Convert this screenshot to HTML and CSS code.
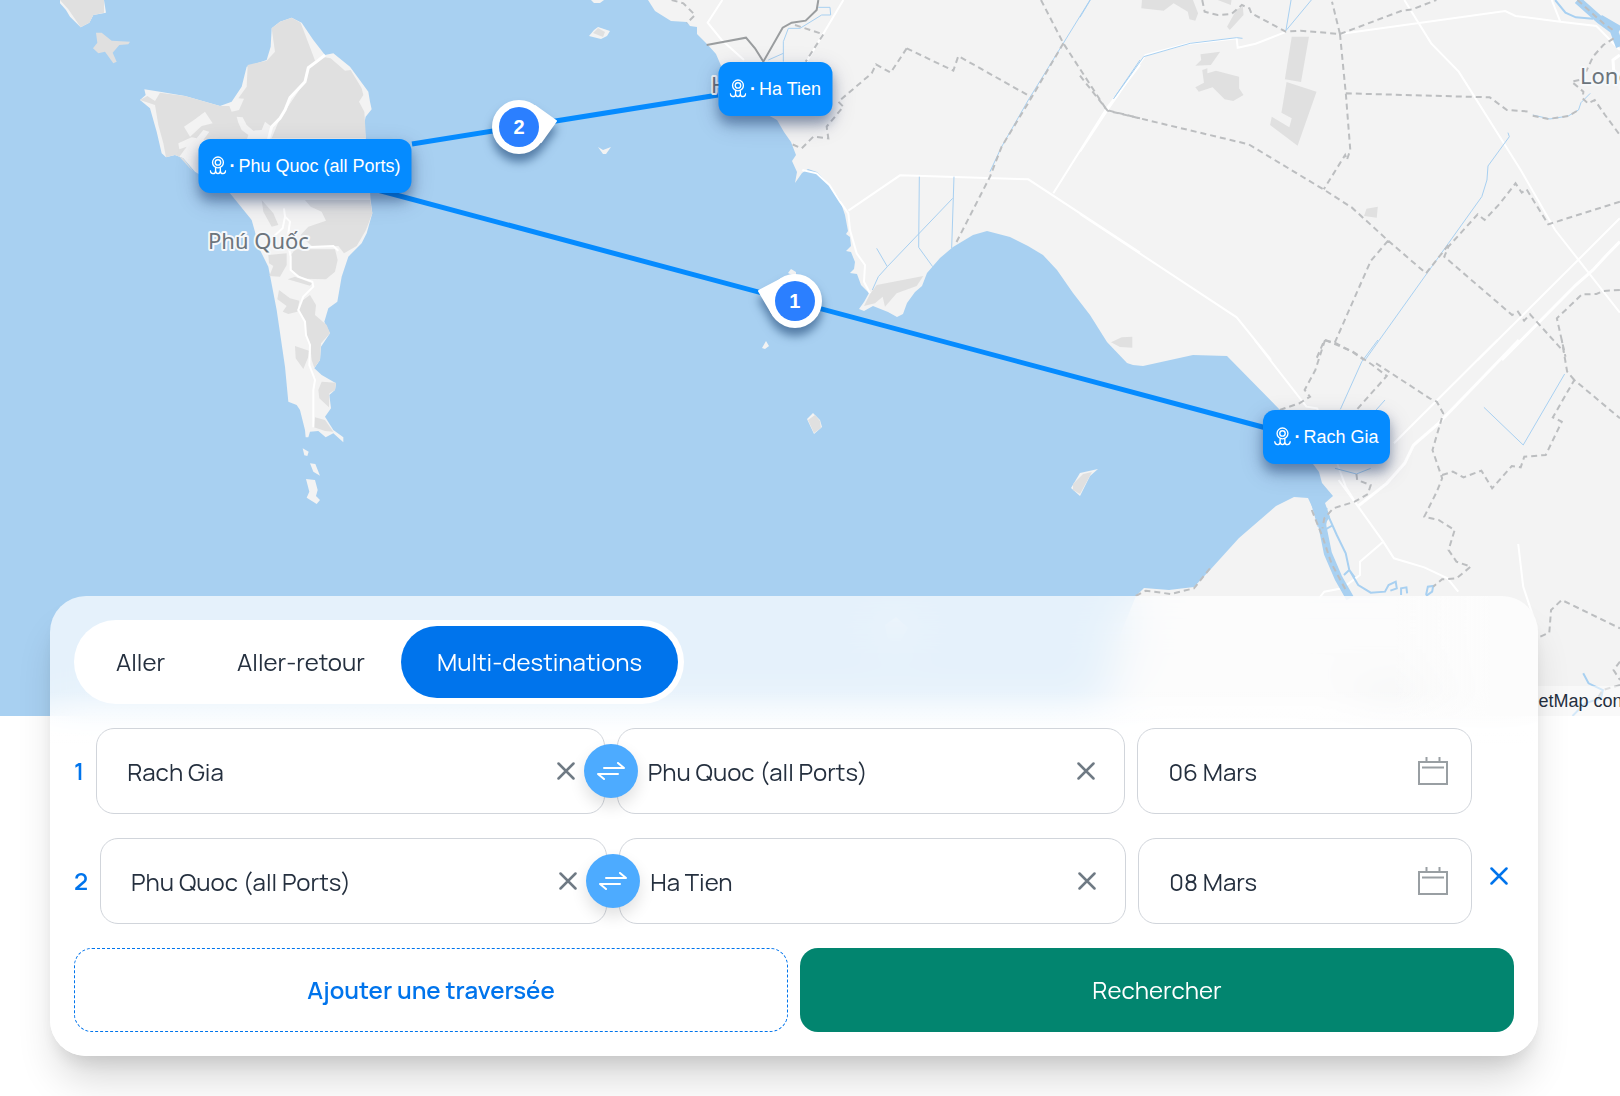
FILE: index.html
```html
<!DOCTYPE html>
<html lang="fr">
<head>
<meta charset="utf-8">
<meta name="viewport" content="width=device-width, initial-scale=1">
<title>Recherche de traversées</title>
<link rel="stylesheet" href="styles.css">
</head>
<body>
<svg class="sprite" aria-hidden="true">
  <symbol id="icon-port" viewBox="0 0 50 56"><circle cx="25" cy="19" r="16"/><circle cx="25" cy="19" r="8"/><path d="M18 33V44Q18 52 10 52Q3 52 2 42M32 33V44Q32 52 40 52Q47 52 48 42M18 44Q19 52 25 52Q31 52 32 44"/></symbol>
  <symbol id="icon-close" viewBox="0 0 36 36"><path d="M3 3L33 33M33 3L3 33"/></symbol>
  <symbol id="icon-swap" viewBox="0 0 28 18"><path d="M7 6H27L21 1M21 12H1L7 17"/></symbol>
  <symbol id="icon-calendar" viewBox="0 0 30 28"><path d="M1 5H29V27H1ZM4 10.500H26M8.500 0V6M21.500 0V6"/></symbol>
</svg>

<main>
  <section class="map" aria-label="Carte des traversées">
    <svg class="map-canvas" viewBox="0 0 1620 716" aria-hidden="true">
      <!-- mainland -->
      <path class="land" d="M648 0L655 11L671 21L687 22L690 26L697 27L697 34L708 45L716 54L722 68L730 85L750 105L777 120L784 132L791 142L796 155L792 161L797 172L795 183L802 173L808 169L817 172L829 184L840 200L845 215L848 231L846 234L850 237L851 246L846 251L851 252L855 262L854 269L850 273L857 274L861 285L869 293L864 302L859 309L864 311L873 306L888 312L897 317L903 314L907 303L915 292L922 286L927 273L940 258L953 247L973 235L987 231L1010 237L1028 246L1043 255L1057 270L1073 293L1090 315L1107 342L1127 363L1133 365L1143 366L1193 355L1227 356L1280 410L1295 440L1319 472L1322 483L1333 496L1325 503L1330 517L1322 528L1308 498L1294 497L1276 506L1239 538L1210 570L1194 587L1169 590L1144 588L1136 596L1118 640L1105 716H1620V0Z"/>

      <!-- Phu Quoc and nearby islets -->
      <g transform="translate(60 0) scale(.33333)">
        <path class="land" d="M635 85L660 65L695 53L725 68L760 120L795 165L820 160L870 200L925 275L930 305L935 328L917 350L912 375L918 420L932 600L937 640L920 700L905 730L865 770L845 830L832 905L805 925L793 965L810 1000L783 1040L780 1080L763 1105L785 1125L828 1150L825 1170L808 1185L813 1225L795 1250L820 1290L850 1312V1327L820 1300L797 1312L775 1293L750 1295L745 1312H737L735 1290L720 1230L710 1215L685 1205L675 1100L650 930L625 800L600 750L575 660L510 580L405 515L370 475L345 465L318 472L305 460L290 395L270 325L240 300L257 285L253 268L300 275L375 288L480 318L515 305L545 260L560 200L620 180L632 140Z"/>
        <path class="land" d="M0 10L18 30L30 50L62 82L88 68L100 45L138 38L132 0H0ZM728 1345L746 1355L742 1368L733 1366ZM750 1390L766 1392L780 1427L760 1415ZM738 1437L765 1440L773 1470L768 1488L780 1500L770 1512L740 1493L748 1475Z"/>
        <path class="park" d="M0 0L25 28L62 82L88 68L100 45L132 38V0ZM108 98L125 98L155 122L210 125L205 133L178 135L158 158L170 185L160 190L135 155L115 160L99 145L112 128Z"/>
        <path class="park" d="M635 85L660 65L695 53L722 68L767 187L745 203L735 245L695 290L675 330L660 355L635 380L615 365L605 390L580 392L560 375L548 352L530 350L535 368L545 390L565 405L560 420H430L448 395L430 390L410 415L395 412L355 430L358 448L380 440L358 470L400 515L370 475L345 465L318 472L310 430L295 375L285 315L240 300L262 288L285 303L300 278L375 288L480 318L508 318L515 335L537 330L552 296L535 295L560 260L563 195L620 182L645 155L640 120Z"/>
        <path class="park" d="M767 187L795 172L812 175L855 212L872 210L905 265L910 285L897 305L913 335L918 415H635L660 355L735 245L745 205ZM735 600H930L937 640L918 690L890 738L852 760L835 738L760 742L735 720L722 705L745 680L798 662L785 635L752 620ZM705 748H825L833 780L825 815L798 838L730 836L695 810L690 770ZM605 600L640 640L655 675L635 680L610 635ZM625 765L680 760V795L660 830L628 828L640 798L627 790ZM683 838L705 830L757 850L750 857ZM657 870L690 895L718 902L712 935L685 942L668 935L680 918L652 898ZM750 885L768 915L765 945L800 975L810 1000L783 1030L780 1080L763 1103L755 1080L750 1030L738 1005L735 965L716 930L722 905ZM705 1038L747 1052L745 1070L730 1107L707 1075ZM785 1145L828 1148L825 1170L808 1180L807 1222L778 1195L775 1170ZM765 1252L795 1260L820 1295L795 1293L762 1282Z"/>
        <path class="land" d="M372 380L405 358L435 335L458 370L425 378L390 410Z"/>
        <path class="road thick" d="M795 165L767 187L745 203L735 245L690 293L675 330L660 355L635 380L625 420"/>
        <path class="road" d="M672 625L675 650L668 685L640 710M675 650L690 665L682 720L692 770V810L715 830L757 845L760 860L730 890L715 930L735 965L738 1005L750 1035L748 1095L765 1140L760 1170V1282M735 742L820 738L835 752"/>
      </g>
      <path class="land" d="M589 36L594 30L598 27L610 31L607 36L601 39ZM598 147L603 150L611 147L606 154H603ZM591 0H604L600 3H594ZM788 273L791 269L796 272V277ZM762 348L766 341L769 346L765 349ZM807 419L813 413L820 420L822 427L814 434ZM1071 488L1080 473L1098 469L1090 476L1080 496ZM885 625L896 617L908 628L900 642L888 640Z"/>
      <path class="park" d="M593 33L598 28L605 32L603 37ZM808 420L815 415L820 421L821 428L814 433ZM1073 484L1083 474L1092 472L1080 494L1073 490Z"/>

      <!-- west side of the mainland -->
      <g transform="translate(640 0) scale(.33333)">
        <path class="park" d="M710 855L850 828L830 858L770 880L735 920L728 890L705 910L672 918L690 882ZM1413 1027L1445 1012L1477 1010V1043L1440 1041Z"/>
        <path class="road" d="M247 0L203 68L245 120L312 180M610 0L500 185M487 510L530 520L568 555L600 605L625 640L630 690L650 760L675 795L672 845L690 880M625 632L780 526L1165 538L1500 758M1500 195L1400 325L1240 580"/>
        <path class="water" d="M838 530L836 742L878 800M942 530L935 745M938 595L742 800L715 830L697 870M710 745L742 800M1350 0L1165 300L1085 440L1050 515M1500 180L1425 290M535 22H570L572 45H545L480 85L445 85L430 125V185M430 160L385 180"/>
        <path class="border-minor" d="M95 0L130 10L165 45L140 70M465 75L550 103L497 185M800 145L940 212L955 168L1175 292M800 145L752 218L708 193L695 220L595 305L610 320L560 380L565 415L520 410L485 445L450 430M1203 0L1270 130L1400 330L1500 355M1270 130L1175 292L1085 440L1050 530L945 735"/>
        <path class="border-major" d="M200 135L318 113L345 145L370 185L428 83L455 68L497 62L530 30L535 0"/>
      </g>

      <!-- east side of the mainland -->
      <g transform="translate(1080 0) scale(.3443 .33333)">
        <path class="park" d="M180 0L178 25L243 32L272 10L313 35L318 58L335 62L343 40L328 0ZM400 0L438 15L440 0ZM473 20L475 45L435 90L427 80L455 28ZM350 163L407 155L380 195L335 197L352 180ZM355 210L370 205V220L395 212L462 230V265L475 285L445 303L420 298L385 262L345 275L335 262L360 248ZM615 110H665L642 246L595 238ZM600 246L687 275L632 437L552 375L557 350L608 382L615 355L585 338ZM832 626L865 620L862 653L825 648Z"/>
        <path class="road" d="M0 455L80 330L190 165L310 132L455 115L458 143L510 131L600 95M755 102L1235 33L1265 48L1395 65L1500 78L1568 150M942 0L1020 130L1100 215L1280 510L1380 690L1568 938M0 642L455 952L555 1080M1568 655L1155 1080M1395 65L1370 0"/>
        <path class="road thick" d="M1568 725L1530 765L1490 810L1440 855L1225 1080M1568 165L1548 180L1550 210L1568 230"/>
        <path class="water" d="M30 0L0 52M97 297L185 170L320 130L455 113L472 115M598 92L613 0M598 92L672 0M1243 398L1247 410L1185 498L1182 540L1167 590L1070 730L828 1080M1315 345L1365 357L1418 348L1448 330L1455 308L1482 280"/>
        <path class="stream" d="M1380 0L1410 38L1440 52L1490 56"/>
        <path class="river" d="M1445 0L1510 60L1550 90L1568 140M1510 55L1568 90"/>
        <path class="border-minor" d="M0 227L80 332L490 433L710 570L790 623L895 722L1005 820L1070 735M355 0L362 35L400 45L440 42L470 15L492 25L498 40L598 95L640 92L755 102L732 5M755 102L935 32L965 28L1035 0M755 102L772 280L785 450L775 480L770 465L708 568M772 280L1190 292L1240 330L1310 335M1315 347L1360 357L1418 348L1448 330M895 722L845 782L820 840L740 1028L710 1020L685 1080M740 1028L790 1055L825 1080M1568 605L1360 673L1297 568L1283 578L1265 550L1220 610L1175 660L1155 643L1070 740L1058 770L1255 945L1272 935L1290 962L1307 943L1405 1055M1568 870L1520 873L1500 882L1458 883L1385 955L1410 1070M1550 115L1520 135L1490 170L1470 215M1450 240L1428 245L1462 275L1460 295L1475 310L1495 300L1525 345L1568 405M1445 0L1520 70L1555 95"/>
      </g>

      <!-- around Rach Gia -->
      <g transform="translate(1060 340) scale(.35714 .33333)">
        <path class="road" d="M545 0L690 200L720 205L800 440L835 500L905 605L935 655L1020 682L1085 715L1115 755M905 605L840 665V705L790 745L740 755L725 775M780 420L835 500M1225 0L935 310M1283 612L1297 740L1325 830"/>
        <path class="road thick" d="M1285 0L1060 250L990 315L965 370L915 430L835 498"/>
        <path class="water" d="M890 0L845 65L785 208M910 180L885 210M1187 202L1297 315L1413 102M770 385L830 402L870 385"/>
        <path class="stream" d="M1465 1000L1480 1030L1520 1050L1515 1075L1470 1090L1435 1128M752 530L775 585L800 640L810 690L835 735L870 758L910 755L920 735L940 725L943 745L925 752M745 540L740 570L765 555M795 705L810 690L825 712M1025 765L1030 740L1045 738L1042 755L1025 768M955 765V745L970 742L972 760"/>
        <path class="river" d="M716 480L735 560L750 640L780 715L812 775M712 480L725 530L740 500"/>
        <path class="border-minor" d="M742 0L715 90L685 150L700 170L670 190L615 210M742 0L820 35L875 75L915 108L830 210M885 70L1035 175L1055 185L1073 220L1043 330L1070 415L1055 455L1020 530L1060 540L1105 570L1088 630L1110 665L1150 680L1110 715L1070 718L1045 740M1070 405L1100 395L1130 412L1180 392L1210 445L1265 378L1290 382L1300 350L1360 345L1405 245L1380 232L1440 120L1568 235M1440 120L1420 95L1405 0M830 402L832 420L870 435L862 462L825 485L765 505L740 535L735 565M705 510L735 590L760 670L800 750M212 768L240 752L310 762L375 745L420 685M1345 890L1370 878L1375 810L1405 780L1568 865M1568 965L1550 990L1568 1020M1568 1035L1520 1050L1505 1075"/>
      </g>

      <path class="route" d="M412 144L718 95M370 188L1270 429"/>
      <g class="place">
        <text x="208" y="249">Phú Quốc</text>
        <text x="711" y="93">Hà Tiên</text>
        <text x="1580" y="84">Long Xuyên</text>
      </g>
    </svg>

    <p class="attribution">© MapTiler © OpenStreetMap contributors</p>

    <div class="port" style="left:18.83%;top:23.12%"><svg class="port-icon"><use href="#icon-port"/></svg><b>·</b><span>Phu Quoc (all Ports)</span></div>
    <div class="port" style="left:47.87%;top:12.43%"><svg class="port-icon"><use href="#icon-port"/></svg><b>·</b><span>Ha Tien</span></div>
    <div class="port" style="left:81.88%;top:61.03%"><svg class="port-icon"><use href="#icon-port"/></svg><b>·</b><span>Rach Gia</span></div>

    <div class="step" style="left:49.07%;top:42.04%">
      <svg class="step-shape" viewBox="-40 -40 80 80" aria-hidden="true"><path d="M-36 -10L-13 -22L-23 12Z"/><circle r="26"/></svg><span class="step-number">1</span>
    </div>
    <div class="step" style="left:32.04%;top:17.7%">
      <svg class="step-shape" viewBox="-40 -40 80 80" aria-hidden="true"><path d="M37 -6L16 -21L22 15Z"/><circle r="26"/></svg><span class="step-number">2</span>
    </div>
  </section>

  <form class="search">
    <div class="tabs" role="tablist" aria-label="Type de trajet">
      <button class="tab" type="button" role="tab" aria-selected="false">Aller</button>
      <button class="tab" type="button" role="tab" aria-selected="false">Aller-retour</button>
      <button class="tab active" type="button" role="tab" aria-selected="true">Multi-destinations</button>
    </div>

    <div class="leg">
      <span class="leg-number">1</span>
      <div class="leg-fields">
        <div class="field">
          <input type="text" value="Rach Gia" aria-label="Départ, traversée 1">
          <button class="clear" type="button" aria-label="Effacer le départ"><svg><use href="#icon-close"/></svg></button>
          <button class="swap" type="button" aria-label="Inverser"><svg><use href="#icon-swap"/></svg></button>
        </div>
        <div class="field">
          <input type="text" value="Phu Quoc (all Ports)" aria-label="Arrivée, traversée 1">
          <button class="clear" type="button" aria-label="Effacer l'arrivée"><svg><use href="#icon-close"/></svg></button>
        </div>
        <div class="field date">
          <input type="text" value="06 Mars" aria-label="Date, traversée 1">
          <svg class="calendar" aria-hidden="true"><use href="#icon-calendar"/></svg>
        </div>
      </div>
      <span class="leg-end"></span>
    </div>

    <div class="leg">
      <span class="leg-number">2</span>
      <div class="leg-fields">
        <div class="field">
          <input type="text" value="Phu Quoc (all Ports)" aria-label="Départ, traversée 2">
          <button class="clear" type="button" aria-label="Effacer le départ"><svg><use href="#icon-close"/></svg></button>
          <button class="swap" type="button" aria-label="Inverser"><svg><use href="#icon-swap"/></svg></button>
        </div>
        <div class="field">
          <input type="text" value="Ha Tien" aria-label="Arrivée, traversée 2">
          <button class="clear" type="button" aria-label="Effacer l'arrivée"><svg><use href="#icon-close"/></svg></button>
        </div>
        <div class="field date">
          <input type="text" value="08 Mars" aria-label="Date, traversée 2">
          <svg class="calendar" aria-hidden="true"><use href="#icon-calendar"/></svg>
        </div>
      </div>
      <button class="leg-end remove" type="button" aria-label="Supprimer la traversée 2"><svg><use href="#icon-close"/></svg></button>
    </div>

    <div class="actions">
      <button class="action add" type="button">Ajouter une traversée</button>
      <button class="action submit" type="submit">Rechercher</button>
    </div>
  </form>
</main>
</body>
</html>
```

FILE: styles.css
```css
* {
  box-sizing: border-box;
}

body {
  margin: 0;
  background: #fff;
  color: #25303f;
  font-family: Manrope, Inter, "Liberation Sans", sans-serif;
  font-size: 24px;
  font-weight: 400;
  line-height: 32px;
}

main {
  overflow: hidden;
  padding-bottom: 40px;
}

button,
input {
  margin: 0;
  padding: 0;
  border: 0;
  background: none;
  color: inherit;
  font: inherit;
}

button {
  cursor: pointer;
}

svg {
  display: block;
  fill: none;
}

.sprite {
  position: absolute;
  width: 0;
  height: 0;
}

/* Map */
.map {
  position: relative;
  isolation: isolate;
  overflow: hidden;
  aspect-ratio: 1620 / 716;
  background: #a8d0f1;
  font-family: "Liberation Sans", Arial, sans-serif;
}

.map-canvas {
  width: 100%;
}

.map-canvas path {
  vector-effect: non-scaling-stroke;
}

.land {
  fill: #f3f3f3;
}

.park {
  fill: #e0e0e0;
}

.road {
  stroke: #fff;
  stroke-width: 2px;
}

.road.thick {
  stroke-width: 3px;
}

.water {
  stroke: #a8d0f1;
  stroke-width: 1px;
}

.stream {
  stroke: #a8d0f1;
  stroke-width: 2px;
}

.river {
  stroke: #a8d0f1;
  stroke-width: 8px;
}

.border-minor {
  stroke: #bcbec0;
  stroke-width: 2px;
  stroke-dasharray: 6 4;
}

.border-major {
  stroke: #9a9d9f;
  stroke-width: 2px;
}

.route {
  stroke: #058bff;
  stroke-width: 5px;
}

.place {
  fill: #6c757d;
  stroke: #f6f8fa;
  stroke-width: 4px;
  stroke-linejoin: round;
  paint-order: stroke;
  font-family: "Noto Sans", sans-serif;
  font-size: 22px;
}

.attribution {
  position: absolute;
  bottom: 0;
  left: 83%;
  margin: 0;
  padding: 0 6px;
  background: rgb(255 255 255 / 50%);
  font-size: 18px;
  line-height: 30px;
  white-space: nowrap;
}

.port {
  position: absolute;
  display: flex;
  align-items: center;
  gap: 3px;
  height: 54px;
  padding: 0 11px;
  border-radius: 12px;
  background: #058bff;
  box-shadow: 0 8px 12px rgb(0 30 80 / 35%), 0 8px 24px rgb(0 30 80 / 20%);
  color: #fff;
  font-size: 18px;
  white-space: nowrap;
  transform: translate(-50%, -50%);
}

.port-icon {
  width: 17px;
  height: 19px;
  stroke: #fff;
  stroke-width: 4px;
}

.step {
  position: absolute;
  display: grid;
  place-items: center;
  width: 80px;
  height: 80px;
  color: #fff;
  font-size: 20px;
  font-weight: 700;
  transform: translate(-50%, -50%);
}

.step > * {
  grid-area: 1 / 1;
}

.step-shape {
  width: 80px;
  height: 80px;
  overflow: visible;
  fill: #fff;
  stroke: #fff;
  stroke-width: 2px;
  stroke-linejoin: round;
  filter: drop-shadow(0 8px 5px rgb(0 40 90 / 50%));
}

.step-number {
  width: 40px;
  height: 40px;
  border-radius: 50%;
  background: #2b7fff;
  line-height: 40px;
  text-align: center;
  z-index: 1;
}

/* Search panel */
.search {
  position: relative;
  z-index: 1;
  display: flex;
  flex-direction: column;
  align-items: stretch;
  gap: 24px;
  margin: -120px 82px 0 50px;
  padding: 24px;
  border-radius: 36px;
  background:
    linear-gradient(to left, #fcfcfc 48px, rgb(252 252 252 / 0%) 144px) top / 100% 120px no-repeat,
    linear-gradient(rgb(255 255 255 / 70%) 96px, #fff 148px);
  box-shadow: 0 30px 40px -8px rgb(0 0 0 / 16%), 0 12px 20px -8px rgb(0 0 0 / 12%);
  backdrop-filter: blur(24px);
}

.tabs {
  display: flex;
  align-self: flex-start;
  padding: 6px;
  border-radius: 42px;
  background: #fff;
}

.tab {
  height: 72px;
  padding: 0 36px;
  border-radius: 36px;
}

.tab.active {
  background: #0074ec;
  color: #fff;
}

.leg {
  display: flex;
  align-items: center;
  gap: 12px;
}

.leg-number {
  color: #0074ec;
  font-weight: 600;
}

.leg-fields {
  display: grid;
  flex: 1;
  grid-template-columns: 38fr 38fr 25fr;
  gap: 12px;
}

.leg-end {
  width: 30px;
}

.field {
  position: relative;
  display: flex;
  align-items: center;
  min-width: 0;
  height: 86px;
  padding: 0 29px 0 30px;
  border: 1px solid #d1d5db;
  border-radius: 18px;
  background: #fff;
}

.field.date {
  padding-right: 23px;
}

.field input {
  flex: 1;
  min-width: 0;
  height: 48px;
  outline: 0;
}

.clear svg,
.remove svg {
  width: 18px;
  height: 18px;
  stroke: #6f7a84;
  stroke-width: 5px;
  stroke-linecap: round;
}

.remove {
  padding-bottom: 10px;
}

.remove svg {
  margin: 0 auto;
  stroke: #0074ec;
}

.swap {
  position: absolute;
  top: 50%;
  right: -34px;
  z-index: 1;
  display: grid;
  place-items: center;
  width: 54px;
  height: 54px;
  border-radius: 50%;
  background: #4dabff;
  box-shadow: 0 8px 16px rgb(0 0 0 / 12%);
  transform: translateY(-50%);
}

.swap svg {
  width: 28px;
  height: 18px;
  stroke: #fff;
  stroke-width: 2px;
  stroke-linecap: round;
  stroke-linejoin: round;
}

.calendar {
  width: 30px;
  height: 28px;
  stroke: #999fa3;
  stroke-width: 2px;
}

.actions {
  display: grid;
  grid-template-columns: 1fr 1fr;
  gap: 12px;
}

.action {
  height: 84px;
  border-radius: 18px;
}

.add {
  border: 1px dashed #0074ec;
  color: #0074ec;
  font-weight: 600;
}

.submit {
  background: #02856f;
  color: #fff;
}
```
